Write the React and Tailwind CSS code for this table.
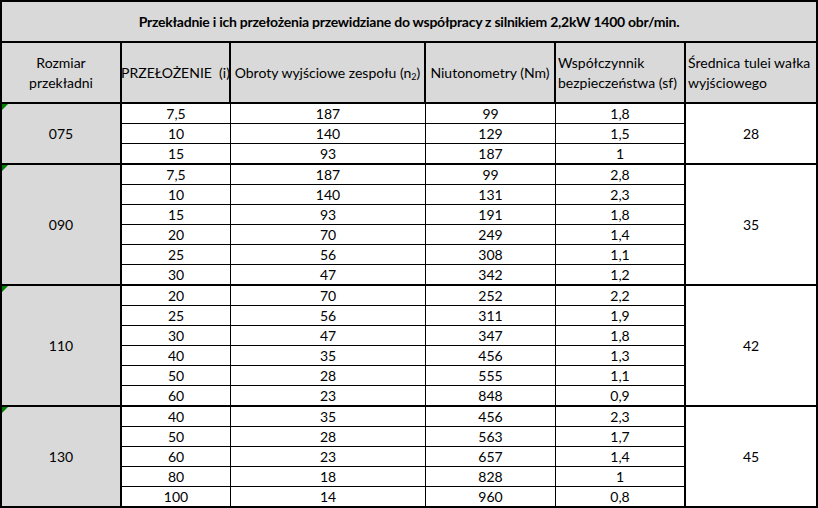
import React from 'react';

const groups = [
  {
    size: '075',
    shaft: '28',
    rows: [
      ['7,5', '187', '99', '1,8'],
      ['10', '140', '129', '1,5'],
      ['15', '93', '187', '1'],
    ],
  },
  {
    size: '090',
    shaft: '35',
    rows: [
      ['7,5', '187', '99', '2,8'],
      ['10', '140', '131', '2,3'],
      ['15', '93', '191', '1,8'],
      ['20', '70', '249', '1,4'],
      ['25', '56', '308', '1,1'],
      ['30', '47', '342', '1,2'],
    ],
  },
  {
    size: '110',
    shaft: '42',
    rows: [
      ['20', '70', '252', '2,2'],
      ['25', '56', '311', '1,9'],
      ['30', '47', '347', '1,8'],
      ['40', '35', '456', '1,3'],
      ['50', '28', '555', '1,1'],
      ['60', '23', '848', '0,9'],
    ],
  },
  {
    size: '130',
    shaft: '45',
    rows: [
      ['40', '35', '456', '2,3'],
      ['50', '28', '563', '1,7'],
      ['60', '23', '657', '1,4'],
      ['80', '18', '828', '1'],
      ['100', '14', '960', '0,8'],
    ],
  },
];

function Group({ group, last }) {
  return (
    <div className={`flex ${last ? '' : 'border-b-2 border-black'}`}>
      {/* merged size cell */}
      <div className="relative w-[120px] flex items-center justify-center bg-[#d9d9d9] border-r-2 border-black">
        <span className="absolute left-0 top-0 w-0 h-0 border-t-[6px] border-r-[6px] border-t-[#008000] border-r-transparent" />
        {group.size}
      </div>

      {/* ratio rows */}
      <div className="w-[564px] flex flex-col border-r-2 border-black divide-y divide-black">
        {group.rows.map((r, i) => (
          <div key={i} className="flex h-[20px] last:h-[19px] leading-[19px]">
            <div className="w-[109px] text-center border-r border-black">{r[0]}</div>
            <div className="w-[195px] text-center border-r border-black">{r[1]}</div>
            <div className="w-[130px] text-center border-r border-black">{r[2]}</div>
            <div className="w-[128px] text-center">{r[3]}</div>
          </div>
        ))}
      </div>

      {/* merged shaft cell */}
      <div className="flex-1 flex items-center justify-center bg-white">{group.shaft}</div>
    </div>
  );
}

export default function App() {
  return (
    <div className="w-[818px] h-[508px] bg-white border-2 border-black text-black text-[14px] font-['Lato',sans-serif] overflow-hidden">
      {/* Title */}
      <div className="h-[41px] flex items-center justify-center bg-[#d9d9d9] border-b-2 border-black font-bold tracking-[-0.25px]">
        Przekładnie i ich przełożenia przewidziane do współpracy z silnikiem 2,2kW 1400 obr/min.
      </div>

      {/* Header */}
      <div className="h-[61px] flex bg-[#d9d9d9] border-b-2 border-black leading-[20px]">
        <div className="w-[120px] flex items-center justify-center text-center border-r-2 border-black">
          Rozmiar<br />przekładni
        </div>
        <div className="w-[109px] flex items-center justify-center whitespace-nowrap border-r-2 border-black">
          PRZEŁOŻENIE&nbsp; (i)
        </div>
        <div className="w-[195px] flex items-center justify-center whitespace-nowrap border-r-2 border-black">
          <span>Obroty wyjściowe zespołu (n<sub className="text-[9px]">2</sub>)</span>
        </div>
        <div className="w-[130px] flex items-center justify-center whitespace-nowrap border-r-2 border-black">
          Niutonometry (Nm)
        </div>
        <div className="w-[130px] flex items-center pl-[2px] whitespace-nowrap border-r-2 border-black">
          Współczynnik<br />bezpieczeństwa (sf)
        </div>
        <div className="flex-1 flex items-center pl-[2px] whitespace-nowrap">
          Średnica tulei wałka<br />wyjściowego
        </div>
      </div>

      {/* Data */}
      {groups.map((g, i) => (
        <Group key={g.size} group={g} last={i === groups.length - 1} />
      ))}
    </div>
  );
}
